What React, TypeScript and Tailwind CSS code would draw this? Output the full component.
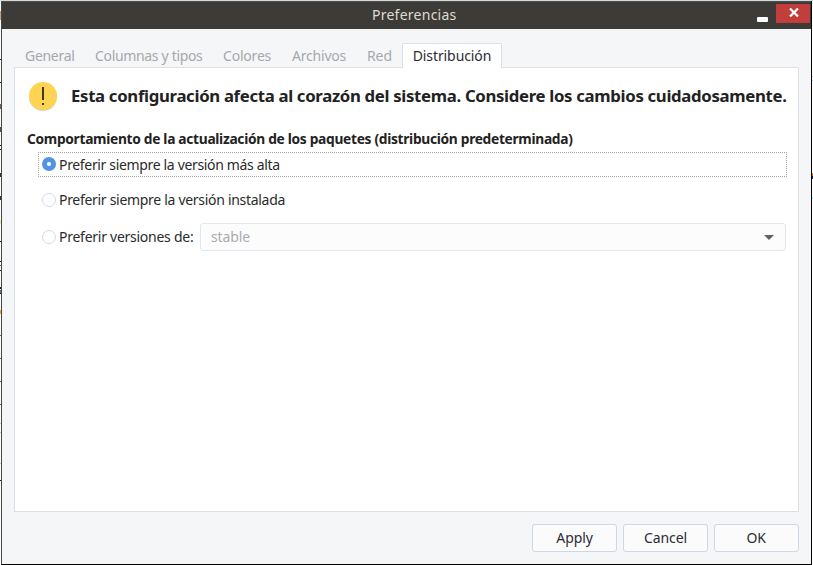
import React from 'react';

const tabs = [
  { label: 'General', style: 'w-[70px] tracking-[-0.3px]' },
  { label: 'Columnas y tipos', style: 'w-[128px] tracking-[-0.33px]' },
  { label: 'Colores', style: 'w-[69px] tracking-[-0.2px]' },
  { label: 'Archivos', style: 'w-[75px] tracking-[-0.2px]' },
  { label: 'Red', style: 'w-[35px] tracking-[-0.1px]' },
];

const leftSpecks = [
  { y: 11, h: 9, c: 'bg-[#c99b78]' },
  { y: 59, h: 1, c: 'bg-[#222222]' },
  { y: 82, h: 1, c: 'bg-[#222222]' },
  { y: 104, h: 5, c: 'bg-[#8a5a45]' },
  { y: 127, h: 5, c: 'bg-[#6a4a55]' },
  { y: 145, h: 1, c: 'bg-[#222222]' },
  { y: 149, h: 1, c: 'bg-[#222222]' },
  { y: 173, h: 4, c: 'bg-[#4b2a35]' },
  { y: 196, h: 4, c: 'bg-[#4b2a35]' },
  { y: 220, h: 4, c: 'bg-[#fbe3b4]' },
  { y: 241, h: 1, c: 'bg-[#222222]' },
  { y: 261, h: 1, c: 'bg-[#222222]' },
  { y: 265, h: 1, c: 'bg-[#a35a1c]' },
  { y: 270, h: 1, c: 'bg-[#222222]' },
  { y: 287, h: 2, c: 'bg-[#222222]' },
  { y: 290, h: 3, c: 'bg-[#4a7da0]' },
  { y: 293, h: 1, c: 'bg-[#222222]' },
  { y: 310, h: 4, c: 'bg-[#f2a13c]' },
  { y: 335, h: 1, c: 'bg-[#a35a1c]' },
  { y: 358, h: 1, c: 'bg-[#a35a1c]' },
  { y: 381, h: 1, c: 'bg-[#a35a1c]' },
  { y: 404, h: 1, c: 'bg-[#a35a1c]' },
  { y: 423, h: 1, c: 'bg-[#cccccc]' },
  { y: 432, h: 1, c: 'bg-[#cccccc]' },
  { y: 463, h: 1, c: 'bg-[#cccccc]' },
  { y: 480, h: 1, c: 'bg-[#222222]' },
];

const rightSpecks = [
  { y: 76, h: 1, c: 'bg-[#7cc8ee]' },
  { y: 80, h: 1, c: 'bg-[#7cc8ee]' },
  { y: 173, h: 3, c: 'bg-[#c47a20]' },
  { y: 176, h: 3, c: 'bg-[#10205c]' },
  { y: 197, h: 2, c: 'bg-[#8fe4f8]' },
];

function Radio({ checked = false }: { checked?: boolean }) {
  return (
    <svg width="14" height="14" viewBox="0 0 14 14" className="-mt-px shrink-0">
      {checked ? (
        <>
          <circle cx="7" cy="7" r="7" fill="#5294e2" />
          <circle cx="7" cy="7" r="2.1" fill="#fff" />
        </>
      ) : (
        <circle cx="7" cy="7" r="6.5" fill="#fff" stroke="#d3d8e6" />
      )}
    </svg>
  );
}

function Button({ label, style }: { label: string; style: string }) {
  return (
    <button className="flex h-[28px] w-[85px] items-center justify-center rounded-[3px] border border-[#cfd6e6] bg-[#fbfbfc] text-[#2b2b33]">
      <span className={style}>{label}</span>
    </button>
  );
}

export default function App() {
  return (
    <div className="relative flex h-[565px] w-[813px] overflow-hidden bg-white px-px pt-px font-['Noto_Sans',sans-serif] text-[14px] leading-[20px] text-[#2b2b2b]">
      <div className="absolute left-0 top-0 h-px w-full bg-[#d5d9de]" />
      {leftSpecks.map((s) => (
        <div key={s.y} className={`absolute left-0 w-px ${s.c}`} style={{ top: s.y, height: s.h }} />
      ))}
      {rightSpecks.map((s) => (
        <div key={s.y} className={`absolute right-0 w-px ${s.c}`} style={{ top: s.y, height: s.h }} />
      ))}

      <div className="flex h-[564px] w-[811px] flex-col border-b border-l border-r border-b-black border-l-[#464844] border-r-black bg-[#f5f6f8]">
        <header className="flex h-[28px] shrink-0 border-t border-[#4c504c] bg-[#3c3b37]">
          <div className="flex w-[755px] items-center pb-[2px] pl-[370px] text-[#dfdbd2]">
            <span className="whitespace-nowrap tracking-[0.25px]">Preferencias</span>
          </div>
          <div className="mt-[15px] h-[5px] w-[11px] rounded-[1px] bg-white" />
          <div className="ml-[8px] mt-[2px] flex h-[19px] w-[34px] items-center justify-center bg-[#c13e3d]">
            <svg width="10" height="9" viewBox="0 0 10 9" className="mb-[2px] ml-px">
              <path d="M1 0.5 L9 8.5 M9 0.5 L1 8.5" stroke="#fff" strokeWidth="2.2" />
            </svg>
          </div>
        </header>

        <nav className="flex h-[38px] shrink-0 items-end pl-[23px] text-[#a6a8ac]">
          {tabs.map((t) => (
            <div key={t.label} className={`h-[21px] shrink-0 whitespace-nowrap ${t.style}`}>
              {t.label}
            </div>
          ))}
          <div className="relative z-10 -mb-px flex h-[25px] w-[100px] justify-center whitespace-nowrap rounded-t-[2px] border border-b-0 border-[#dcdfe3] bg-white pt-[2px] text-[#2b2b33]">
            <span className="tracking-[-0.1px]">Distribución</span>
          </div>
        </nav>

        <main className="ml-[12px] flex h-[445px] w-[785px] shrink-0 flex-col border border-[#dcdfe3] bg-white">
          <div className="flex h-[56px] items-center pl-[14px]">
            <svg width="28" height="29" viewBox="0 0 28 29" className="shrink-0">
              <circle cx="14" cy="15" r="14" fill="#d6d3cb" />
              <circle cx="14" cy="14" r="14" fill="#ffd452" />
              <rect x="13" y="5" width="2" height="13" fill="#3d3a30" />
              <rect x="13" y="21" width="2" height="2" fill="#3d3a30" />
            </svg>
            <h1 className="ml-[14px] whitespace-nowrap text-[16.75px] font-bold text-[#222222] tracking-[-0.32px]">
              Esta configuración afecta al corazón del sistema. Considere los cambios cuidadosamente.
            </h1>
          </div>
          <h2 className="mt-[5px] h-[20px] whitespace-nowrap pl-[12px] text-[13.75px] font-bold text-[#222222] tracking-[-0.3px]">
            Comportamiento de la actualización de los paquetes (distribución predeterminada)
          </h2>
          <label className="ml-[23px] mt-[3px] flex h-[25px] w-[749px] items-center gap-[3px] border border-dotted border-[#a4a4a4] pl-[3px]">
            <Radio checked />
            <span className="whitespace-nowrap tracking-[-0.34px]">Preferir siempre la versión más alta</span>
          </label>
          <label className="ml-[27px] mt-[13px] flex h-[20px] items-center gap-[3px]">
            <Radio />
            <span className="whitespace-nowrap tracking-[-0.3px]">Preferir siempre la versión instalada</span>
          </label>
          <div className="ml-[27px] mt-[13px] flex h-[28px] items-center">
            <label className="flex w-[158px] items-center gap-[3px]">
              <Radio />
              <span className="whitespace-nowrap tracking-[-0.26px]">Preferir versiones de:</span>
            </label>
            <div className="flex h-[28px] w-[586px] items-center justify-between rounded-[3px] border border-[#e3e6ef] bg-[#fcfcfd] pl-[10px] pr-[11px] text-[#a9abb0]">
              <span className="tracking-[-0.1px]">stable</span>
              <svg width="10" height="5" viewBox="0 0 10 5">
                <path d="M0 0H10L5 5Z" fill="#5c616c" />
              </svg>
            </div>
          </div>
        </main>

        <footer className="mt-[12px] flex justify-end gap-[6px] pr-[12px]">
          <Button label="Apply" style="tracking-[-0.1px]" />
          <Button label="Cancel" style="tracking-[-0.1px]" />
          <Button label="OK" style="mr-px tracking-[-0.3px]" />
        </footer>
      </div>
    </div>
  );
}
